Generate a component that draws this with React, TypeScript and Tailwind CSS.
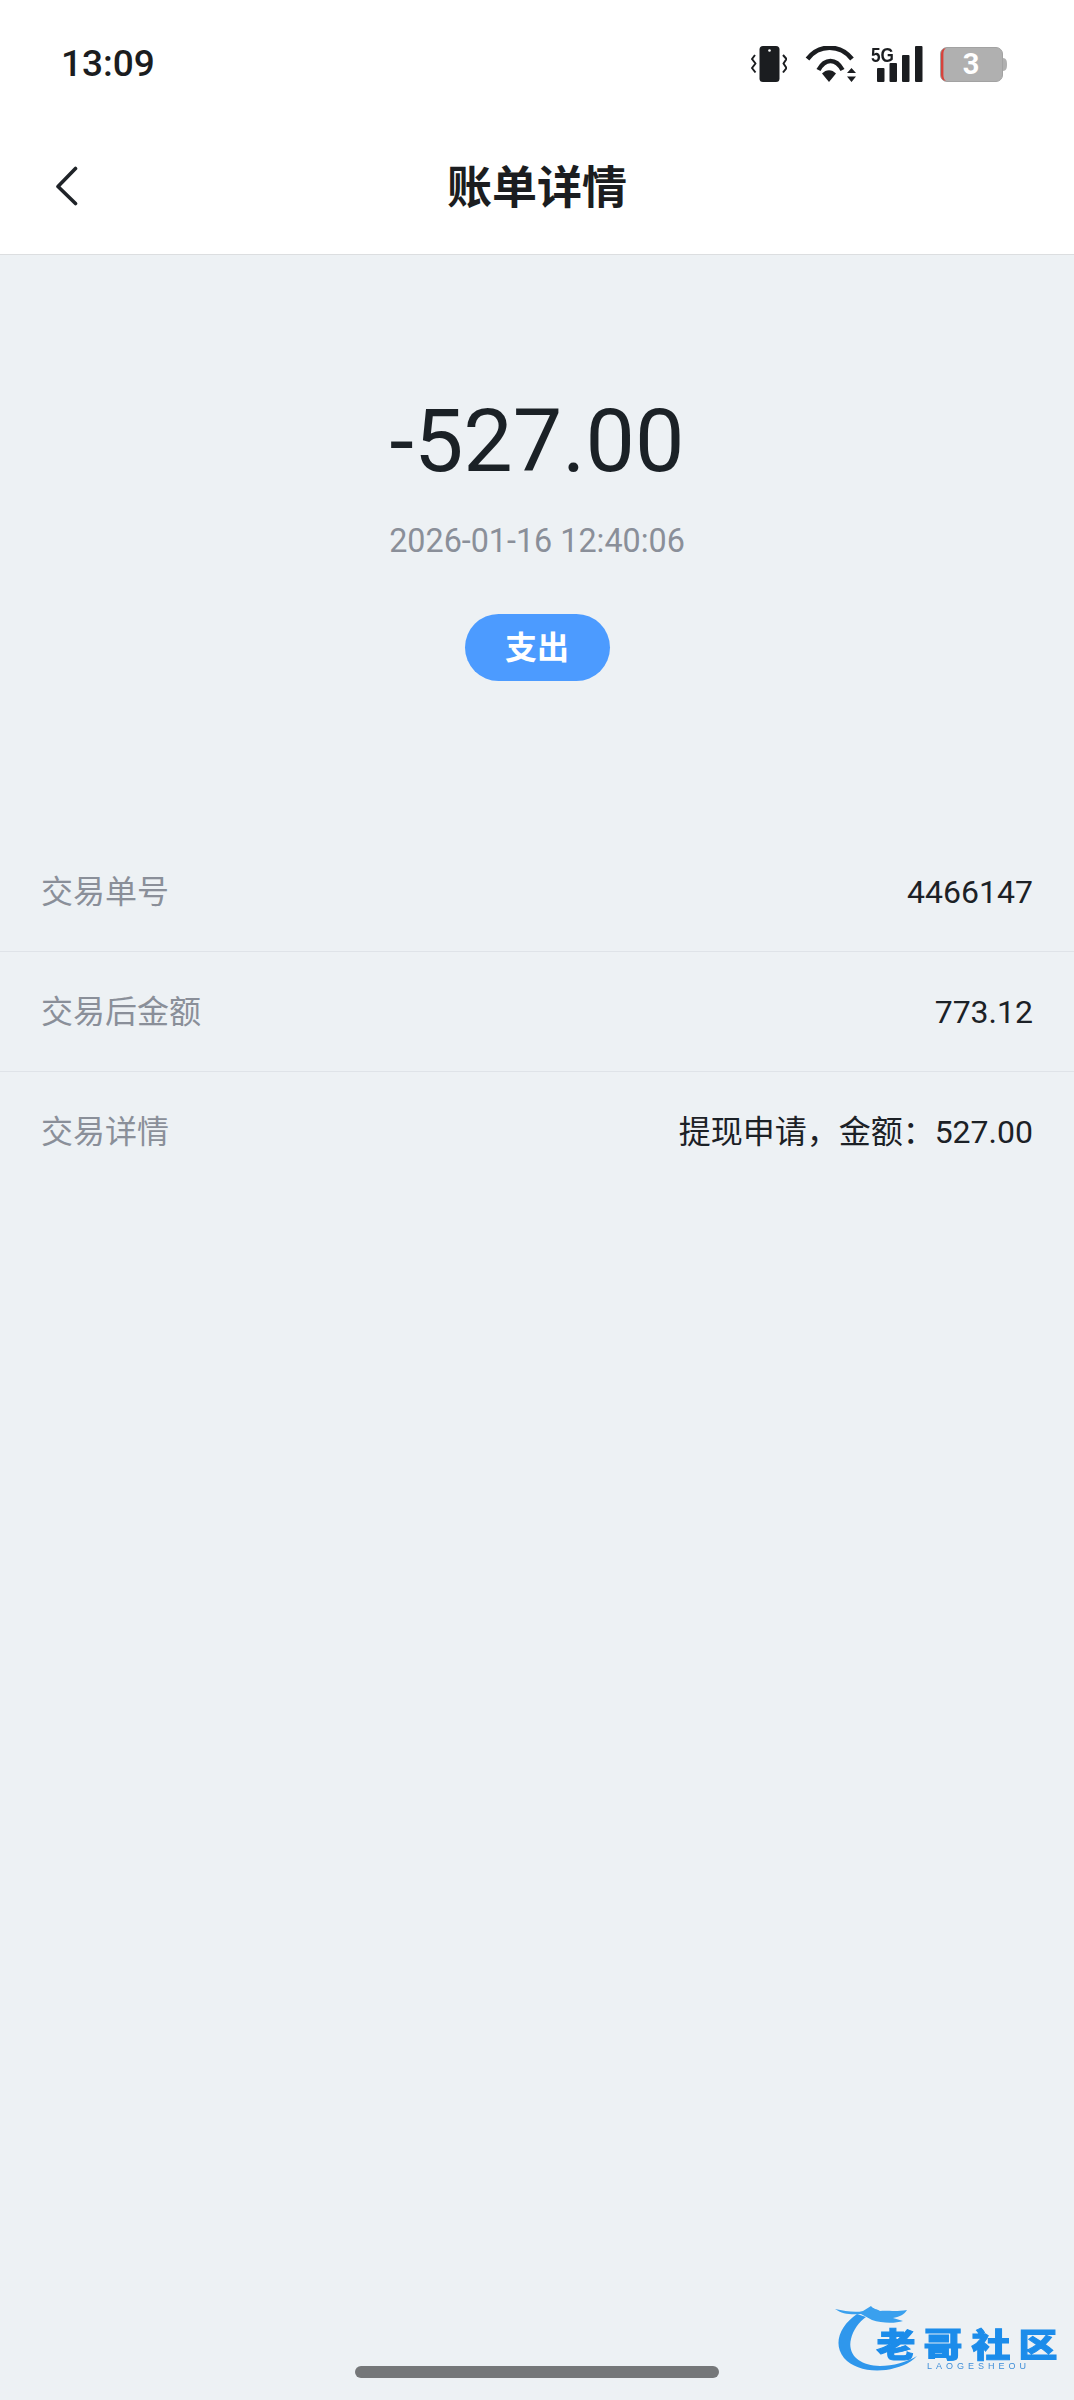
const FONT = "font-[Roboto,'Noto_Sans_CJK_SC',sans-serif]";

function VibrateIcon() {
  return (
    <svg width="36" height="36" viewBox="0 0 36 36" fill="none">
      <rect x="8.500" y="0" width="20" height="36" rx="3.500" fill="#1b1d20" />
      <circle cx="18.500" cy="4.500" r="1.300" fill="#fff" />
      <path d="M4 9 1 13l3.500 4.500L1 22l3.500 4.500M32 9l3.500 4-3 4.500 3 4.500-3.500 4.500" stroke="#1b1d20" strokeWidth="2" strokeLinejoin="round" />
    </svg>
  );
}

function WifiIcon() {
  return (
    <svg width="52" height="36" viewBox="0 0 52 36" fill="none">
      <path d="M2.500 13C14 -2 35 -2 47 13" stroke="#1b1d20" strokeWidth="4.600" />
      <path d="M13.500 24C20 12 31 12 37.500 24" stroke="#1b1d20" strokeWidth="4.600" />
      <path d="M17 27.500C21 23 27 23 31 27.500L24 36Z" fill="#1b1d20" />
      <path d="M46.500 22 51 27H42ZM46.500 36 42 30.500H51Z" fill="#1b1d20" />
    </svg>
  );
}

function SignalIcon() {
  return (
    <div className="relative h-[36px] w-[52px]">
      <span className="absolute left-0 top-[-2px] origin-left scale-x-[0.82] text-[21px] font-bold leading-[22px] text-[#1b1d20] [font-family:'Liberation_Sans',sans-serif]">5G</span>
      <svg className="absolute left-0 top-0" width="52" height="36" viewBox="0 0 52 36" fill="#1b1d20">
        <rect x="6" y="22" width="7.500" height="14" rx="1" />
        <rect x="18.500" y="17" width="7.500" height="19" rx="1" />
        <rect x="31" y="9" width="7.500" height="27" rx="1" />
        <rect x="44" y="0" width="7.500" height="36" rx="1" />
      </svg>
    </div>
  );
}

function BatteryIcon() {
  return (
    <div className="relative h-[35px] w-[67px]">
      <svg className="absolute left-0 top-0" width="67" height="35" viewBox="0 0 67 35" fill="none">
        <rect x="0.500" y="0.500" width="62" height="34" rx="6.500" fill="#b0b0b0" stroke="#a2a2a2" />
        <path d="M6 1C2.500 1.500 1 3.500 1 7v21c0 3.500 1.500 5.500 5 6-1.600-1-2.600-3-2.600-6V7C3.400 4 4.400 2 6 1Z" fill="#d8423a" />
        <path d="M63 11c3 .5 4 2 4 6.500S66 23.500 63 24Z" fill="#b0b0b0" />
      </svg>
      <span className={`absolute inset-y-0 left-0 flex w-[62px] items-center justify-center text-[29px] font-bold leading-none text-white ${FONT}`}>3</span>
    </div>
  );
}

function Row({ label, value, last }: { label: string; value: string; last?: boolean }) {
  return (
    <div className={`flex h-[120px] items-center justify-between px-[41px] text-[32px] ${last ? "" : "border-b border-[#dfe3e8]"}`}>
      <span className="text-[#8a8f99]">{label}</span>
      <span className="text-[#1c2126]">{value}</span>
    </div>
  );
}

function Watermark() {
  return (
    <div className="absolute left-[835px] top-[2305px] h-[67px] w-[222px] blur-[0.6px]">
      <svg className="absolute left-0 top-0" width="222" height="67" viewBox="0 0 222 67" fill="none">
        <path d="M22 9C6 20-3 38 9 53c9 10 24 14 42 12 12-2 24-6 31-14-10 6-24 10-37 10C25 61 12 50 16 34c2-9 8-17 15-22Z" fill="#2f97ec" />
        <path d="M0 4c10 2 20 4 28 2l8-5c2 3 6 3 9 5 7-1 14 1 27-1-3 5-8 7-14 8l10 3c-9 3-22 2-31-1L26 9C16 10 7 9 0 4Z" fill="#3aa0ee" />
      </svg>
      <div className="absolute left-[42px] top-[19px] flex h-[38px] w-[180px] items-center justify-between text-[33px] font-black leading-none text-[#1c8cea] [-webkit-text-stroke:1px_#1c8cea] [font-family:'Noto_Sans_CJK_SC',sans-serif]">
        <span className="flex w-[38px] scale-x-[1.180] justify-center">老</span>
        <span className="flex w-[38px] scale-x-[1.180] justify-center">哥</span>
        <span className="flex w-[38px] scale-x-[1.180] justify-center">社</span>
        <span className="flex w-[38px] scale-x-[1.180] justify-center">区</span>
      </div>
      <span className="absolute left-[92px] top-[56px] whitespace-nowrap text-[9px] font-medium leading-[10px] tracking-[4px] text-[#3f8ed8] [font-family:'Liberation_Sans',sans-serif]">LAOGESHEOU</span>
    </div>
  );
}

export default function App() {
  return (
    <div className={`relative flex h-[2400px] flex-col bg-[#edf1f4] ${FONT}`}>
      <header className="h-[255px] border-b border-[#dcdee0] bg-white">
        <div className="flex h-[82px] items-end justify-between pl-[61px] pr-[67px]">
          <span className="relative top-[2px] text-[37px] font-medium leading-[40px] text-[#1b1d20]">13:09</span>
          <div className="flex items-center">
            <VibrateIcon />
            <div className="ml-[18px]"><WifiIcon /></div>
            <div className="ml-[14px]"><SignalIcon /></div>
            <div className="ml-[17px]"><BatteryIcon /></div>
          </div>
        </div>
        <div className="relative flex h-[172px] items-center justify-center pt-[40px]">
          <svg className="absolute left-[53px] top-[84px]" width="26" height="40" viewBox="0 0 26 40" fill="none">
            <path d="M22.500 2.500 5 20.500 22.500 37.500" stroke="#1f2328" strokeWidth="3.600" strokeLinecap="round" strokeLinejoin="round" />
          </svg>
          <h1 className="text-[45px] font-bold leading-none text-[#1b1d20]">账单详情</h1>
        </div>
      </header>

      <section className="flex flex-col items-center pt-[130px]">
        <div className="text-[88px] leading-[112px] text-[#1b2126]">-527.00</div>
        <div className="mt-[23px] text-[32.300px] leading-[42px] text-[#8a8f99]">2026-01-16 12:40:06</div>
        <div className="mt-[52px] flex h-[67px] w-[145px] items-center justify-center rounded-full bg-[#4c9bff] text-[32px] font-bold text-white">支出</div>
      </section>

      <section className="mt-[151px]">
        <Row label="交易单号" value="4466147" />
        <Row label="交易后金额" value="773.12" />
        <Row label="交易详情" value="提现申请，金额：527.00" last />
      </section>

      <div className="mt-auto flex justify-center pb-[22px]">
        <div className="h-[12px] w-[364px] rounded-[6px] bg-[#757779]" />
      </div>
      <Watermark />
    </div>
  );
}
